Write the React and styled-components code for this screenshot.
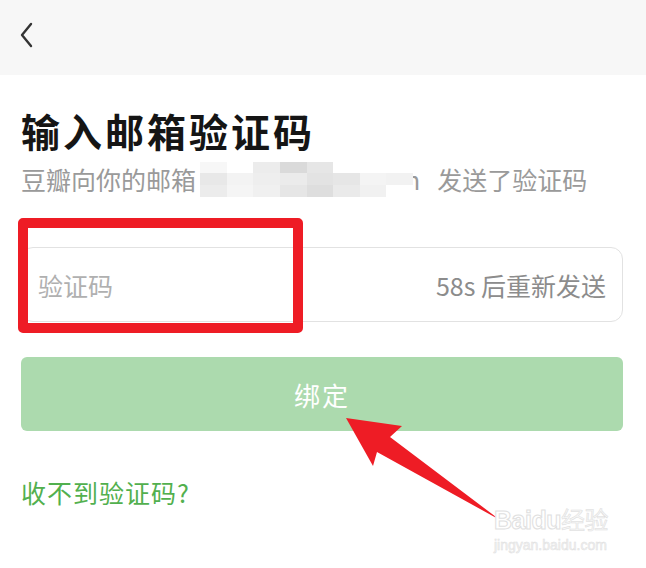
import styled, { createGlobalStyle } from "styled-components";

const GlobalStyle = createGlobalStyle`
  html, body {
    margin: 0;
    padding: 0;
    background: #fff;
  }
  body {
    font-family: "Noto Sans CJK SC", "Noto Sans", sans-serif;
  }
`;

const Page = styled.div`
  position: relative;
  width: 646px;
  height: 568px;
  overflow: hidden;
  background: #fff;
`;

const Header = styled.header`
  height: 75px;
  background: #f7f7f7;
  display: flex;
  align-items: center;
  padding-left: 16px;
`;

const BackButton = styled.button`
  border: none;
  background: none;
  padding: 0;
  width: 20px;
  height: 30px;
  display: flex;
  align-items: center;
  justify-content: center;
  margin-top: -6px;
`;

const Content = styled.main`
  padding: 0 23px 0 21px;
  display: flex;
  flex-direction: column;
`;

const Title = styled.h1`
  margin: 32px 0 0;
  font-size: 39px;
  line-height: 46px;
  font-weight: 700;
  letter-spacing: 3px;
  color: #151515;
`;

const Subtitle = styled.p`
  margin: 8px 0 0;
  font-size: 25px;
  line-height: 36px;
  color: #9a9a9a;
  display: flex;
  align-items: center;
  white-space: nowrap;
`;

const Mosaic = styled.span`
  display: inline-grid;
  grid-template-columns: repeat(8, 1fr);
  grid-template-rows: repeat(3, 1fr);
  width: 213px;
  height: 35px;
  margin: 0 -8px 0 4px;
  position: relative;
  z-index: 1;
`;

const Cell = styled.span`
  background: ${(p) => p.$c};
`;

const Hidden = styled.span`
  margin-right: 17px;
`;

const InputBox = styled.div`
  margin-top: 50px;
  height: 73px;
  border: 1px solid #e2e2e2;
  border-radius: 12px;
  display: flex;
  align-items: center;
  justify-content: space-between;
  padding: 0 16px 0 16px;
`;

const CodeInput = styled.input`
  border: none;
  outline: none;
  background: none;
  font-family: inherit;
  font-size: 25px;
  width: 200px;
  padding: 0;
  color: #333;
  &::placeholder {
    color: #b0b0b0;
  }
`;

const Resend = styled.span`
  font-size: 25px;
  color: #8c8c8c;
`;

const BindButton = styled.button`
  margin-top: 35px;
  height: 74px;
  border: none;
  border-radius: 6px;
  background: #acdaae;
  color: #fff;
  font-family: inherit;
  font-size: 26px;
  letter-spacing: 2px;
`;

const HelpLink = styled.a`
  margin-top: 46px;
  font-size: 25px;
  line-height: 30px;
  letter-spacing: 1px;
  color: #52b04e;
  text-decoration: none;
`;

const Highlight = styled.div`
  position: absolute;
  left: 18px;
  top: 218px;
  width: 265px;
  height: 95px;
  border: 10px solid #ee1c25;
  border-radius: 5px;
  pointer-events: none;
`;

const Annotation = styled.svg`
  position: absolute;
  left: 0;
  top: 0;
  pointer-events: none;
`;

const Watermark = styled.div`
  position: absolute;
  left: 494px;
  top: 505px;
  display: flex;
  flex-direction: column;
  align-items: flex-start;
  color: #fff;
  font-family: "Liberation Sans", "Noto Sans CJK SC", sans-serif;
  -webkit-text-stroke: 1px #e0e0e0;
  pointer-events: none;
`;

const WaterBrand = styled.span`
  font-size: 25px;
  font-weight: 700;
  line-height: 30px;
  letter-spacing: -0.5px;
`;

const WaterCjk = styled.span`
  font-weight: 400;
  font-size: 24px;
  color: #f6f6f6;
  -webkit-text-stroke: 0.5px #dcdcdc;
`;

const WaterUrl = styled.span`
  font-size: 14px;
  line-height: 18px;
  color: #f4f4f4;
  -webkit-text-stroke: 0.5px #e0e0e0;
`;

const mosaic = [
  "#f7f7f7", "#ffffff", "#ececec", "#dadada", "#e6e6e6", "#ffffff", "#ffffff", "#ffffff",
  "#e8e8e8", "#f3f3f3", "#eeeeee", "#ebebeb", "#e3e3e3", "#e6e6e6", "#f4f4f4", "#f2f2f2",
  "#ececec", "#f5f5f5", "#f0f0f0", "#e6e6e6", "#dedede", "#eaeaea", "#f1f1f1", "#ffffff",
];

export default function App() {
  return (
    <Page>
      <GlobalStyle />
      <Header>
        <BackButton aria-label="back">
          <svg width="14" height="26" viewBox="0 0 14 26">
            <path d="M12 2 L3 13 L12 24" fill="none" stroke="#333" strokeWidth="2.4" strokeLinecap="round" strokeLinejoin="round" />
          </svg>
        </BackButton>
      </Header>
      <Content>
        <Title>输入邮箱验证码</Title>
        <Subtitle>
          豆瓣向你的邮箱
          <Mosaic>
            {mosaic.map((c, i) => (
              <Cell key={i} $c={c} />
            ))}
          </Mosaic>
          <Hidden>n</Hidden>
          发送了验证码
        </Subtitle>
        <InputBox>
          <CodeInput placeholder="验证码" />
          <Resend>58s 后重新发送</Resend>
        </InputBox>
        <BindButton>绑定</BindButton>
        <HelpLink href="#">收不到验证码?</HelpLink>
      </Content>
      <Highlight />
      <Annotation width="646" height="568" viewBox="0 0 646 568">
        <polygon points="346,418 402,426 390,437 500,520 377,452 373,466" fill="#ee1c25" />
      </Annotation>
      <Watermark>
        <WaterBrand>
          Baidu<WaterCjk>经验</WaterCjk>
        </WaterBrand>
        <WaterUrl>jingyan.baidu.com</WaterUrl>
      </Watermark>
    </Page>
  );
}
